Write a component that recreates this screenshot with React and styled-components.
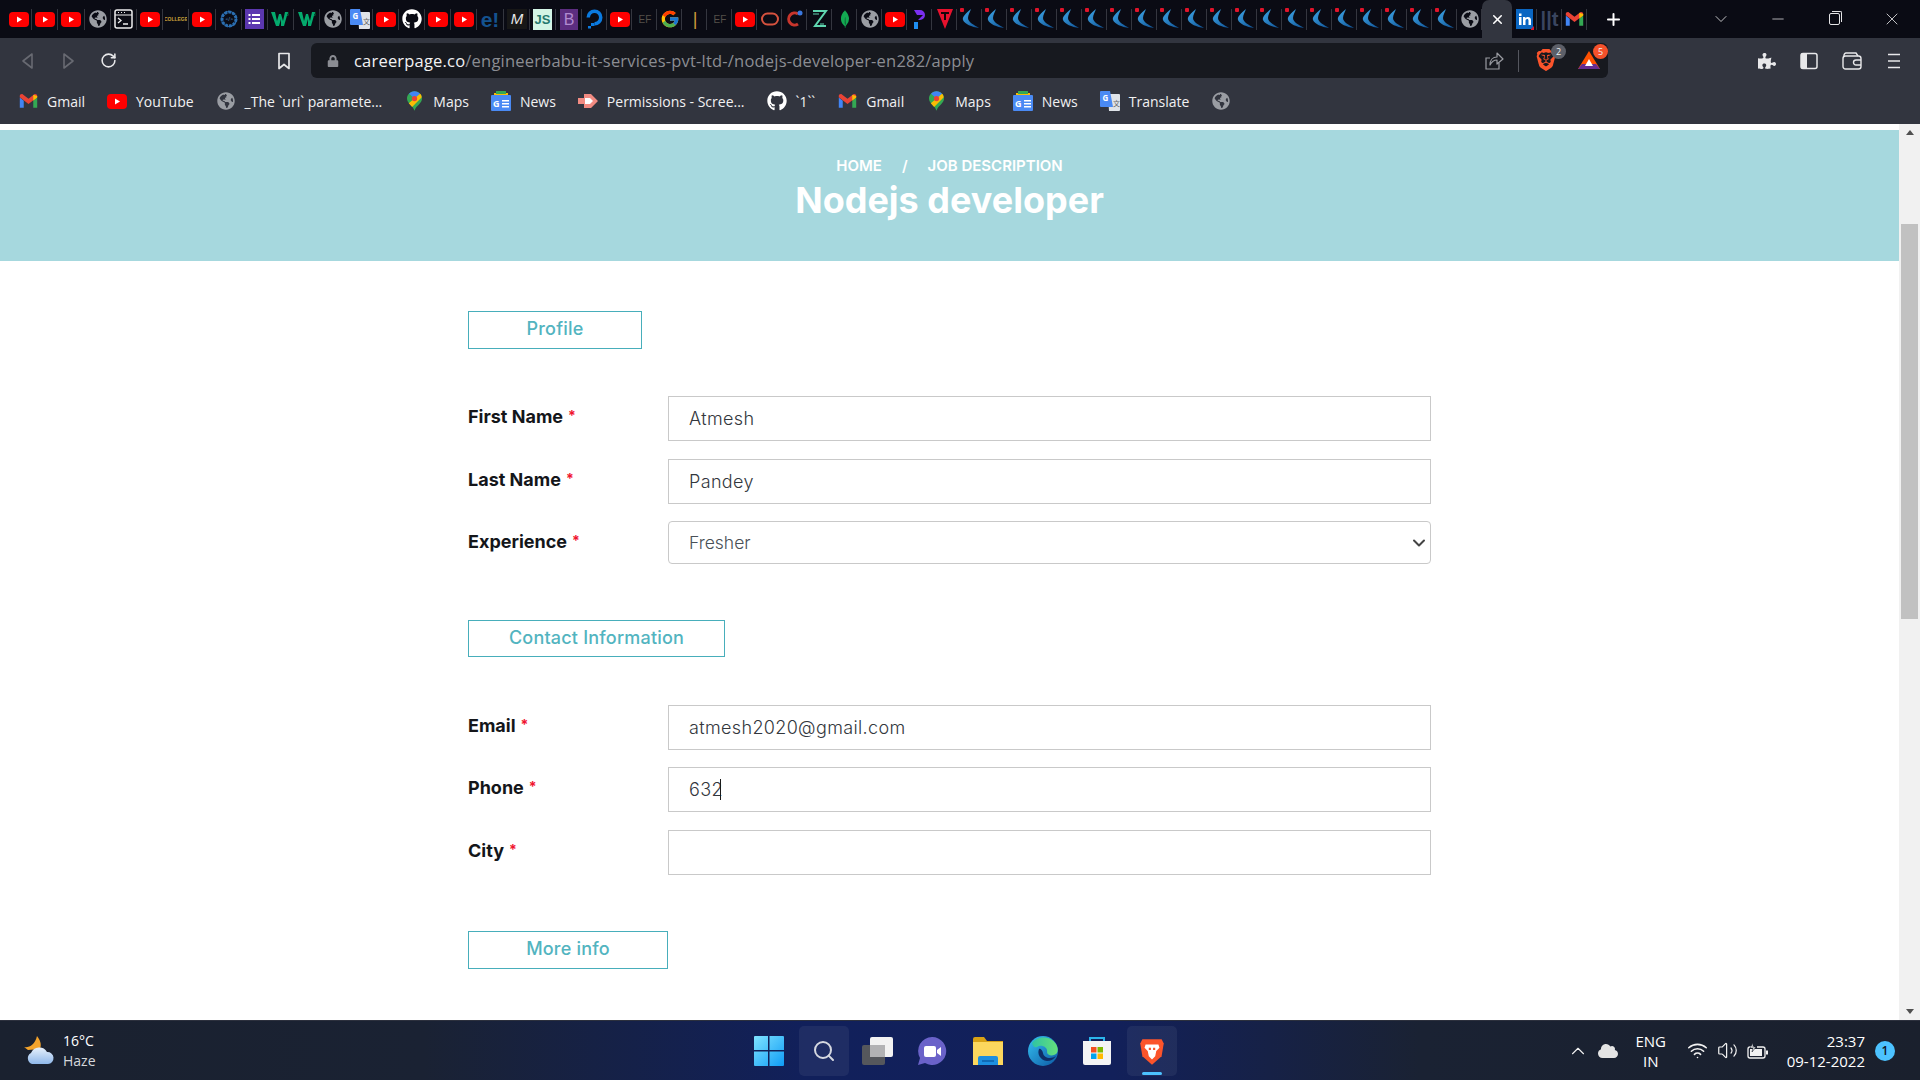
import React from "react"
import styled, { createGlobalStyle } from "styled-components"
import {
  ChevronDown,
  ChevronUp,
  Minus,
  Plus,
  RotateCw,
  Search,
  Volume2,
  Wifi,
  X,
} from "lucide-react"
import {
  FaCloud,
  FaGithub,
  FaGlobeAmericas,
  FaLock,
  FaPuzzlePiece,
} from "react-icons/fa"
import { FcGoogle } from "react-icons/fc"
import { SiBrave, SiMongodb } from "react-icons/si"

const GlobalStyle = createGlobalStyle`
  html, body {
    margin: 0;
    padding: 0;
    height: 100%;
    overflow: hidden;
    background: #fff;
  }
  * {
    box-sizing: border-box;
  }
`

const Screen = styled.div`
  display: flex;
  flex-direction: column;
  width: 1920px;
  height: 1080px;
  overflow: hidden;
  font-family: "Inter", "Liberation Sans", sans-serif;
`

/* tab strip */

const TabStrip = styled.div`
  display: flex;
  align-items: stretch;
  height: 38px;
  padding-left: 6px;
  background: #0a0b14;
`

const TabCell = styled.div`
  position: relative;
  display: flex;
  flex: none;
  align-items: center;
  justify-content: center;
  width: ${(p) => p.$w}px;
  height: 38px;

  &::after {
    content: "";
    position: absolute;
    right: 0;
    top: 9px;
    bottom: 8px;
    width: 1px;
    background: #34363f;
  }
`

const ActiveTab = styled.div`
  display: flex;
  flex: none;
  align-items: center;
  justify-content: center;
  width: 30px;
  height: 38px;
  border-radius: 7px 7px 0 0;
  background: #32353f;
  color: #fff;
`

const NewTab = styled.div`
  display: flex;
  align-items: center;
  justify-content: center;
  width: 30px;
  margin-left: 11px;
  color: #fff;
`

const WindowControls = styled.div`
  display: flex;
  align-items: center;
  margin-left: auto;
  color: #e4e4e6;
`

const WindowButton = styled.div`
  display: flex;
  align-items: center;
  justify-content: center;
  width: 57px;
`

const RestoreIcon = styled.div`
  position: relative;
  width: 11px;
  height: 12px;
  border: 1px solid #e4e4e6;
  border-radius: 2px;

  &::before {
    content: "";
    position: absolute;
    top: -3px;
    right: -3px;
    width: 9px;
    height: 10px;
    border-top: 1px solid #e4e4e6;
    border-right: 1px solid #e4e4e6;
    border-radius: 0 2px 0 0;
  }
`

/* toolbar */

const Toolbar = styled.div`
  display: flex;
  align-items: center;
  height: 45px;
  padding: 0 0 0 17px;
  background: #32353f;
`

const ToolButton = styled.div`
  display: flex;
  flex: none;
  align-items: center;
  justify-content: center;
  width: 20px;
  height: 20px;
  margin-right: ${(p) => p.$mr || 0}px;
  color: ${(p) => p.$color || "#e8e8ea"};
`

const UrlBar = styled.div`
  display: flex;
  flex: none;
  align-items: center;
  width: 1297px;
  height: 35px;
  margin-right: 149px;
  padding: 0 0 0 16px;
  border-radius: 6px;
  background: #17191f;
`

const UrlText = styled.div`
  margin-left: 15px;
  font-family: "Open Sans", "Liberation Sans", sans-serif;
  font-size: 16.5px;
  letter-spacing: 0.2px;
  white-space: nowrap;
  color: #8b8d93;

  b {
    font-weight: 400;
    color: #f2f2f3;
  }
`

const UrlTools = styled.div`
  display: flex;
  align-items: center;
  margin-left: auto;
  margin-right: 7px;
`

const UrlDivider = styled.div`
  width: 1px;
  height: 22px;
  margin: 0 16px 0 14px;
  background: #55575f;
`

const BadgeIcon = styled.div`
  position: relative;
  width: 24px;
  height: 24px;
  margin-right: ${(p) => p.$mr || 0}px;
`

const Counter = styled.span`
  position: absolute;
  top: -5px;
  right: -7px;
  width: 15px;
  height: 15px;
  border-radius: 50%;
  background: ${(p) => p.$bg};
  font-family: "Open Sans", sans-serif;
  font-size: 9px;
  line-height: 15px;
  text-align: center;
  color: #f0f0f0;
`

/* bookmarks */

const BookmarkBar = styled.div`
  display: flex;
  align-items: center;
  gap: 22px;
  height: 41px;
  padding: 0 0 5px 18px;
  background: #32353f;
`

const Bookmark = styled.div`
  display: flex;
  align-items: center;
  gap: 9px;
  font-family: "Open Sans", "Liberation Sans", sans-serif;
  font-size: 14px;
  white-space: nowrap;
  color: #f1f1f2;
`

const BookmarkIcon = styled.span`
  display: flex;
  flex: none;
  align-items: center;
  justify-content: center;
  width: 20px;
  height: 20px;
`

/* page */

const Viewport = styled.div`
  display: flex;
  flex: 1;
  min-height: 0;
`

const Page = styled.main`
  flex: 1;
  min-width: 0;
  padding-top: 6px;
  background: #fff;
`

const Hero = styled.header`
  display: flex;
  flex-direction: column;
  align-items: center;
  height: 131px;
  padding-top: 26px;
  background: #a6d8de;
  color: #fff;
`

const Breadcrumb = styled.div`
  display: flex;
  gap: 20px;
  font-size: 15px;
  font-weight: 600;
  line-height: 20px;
`

const Title = styled.h1`
  margin: 1px 0 0;
  font-size: 36px;
  font-weight: 700;
  line-height: 46px;
`

const Form = styled.form`
  width: 963px;
  margin: 0 auto;
  padding-top: 50px;
`

const SectionBox = styled.div`
  width: ${(p) => p.$w}px;
  height: ${(p) => p.$h || 38}px;
  margin-bottom: ${(p) => p.$mb || 0}px;
  border: 1px solid #48aebb;
  font-size: 18px;
  font-weight: 500;
  letter-spacing: 0.2px;
  line-height: 33px;
  text-align: center;
  color: #52b4c0;
`

const Row = styled.div`
  display: flex;
  margin-bottom: ${(p) => p.$mb || 0}px;
`

const Label = styled.label`
  flex: none;
  width: 200px;
  padding-top: 9px;
  font-size: 18px;
  font-weight: 700;
  line-height: 24px;
  color: #14161a;

  sup {
    margin-left: 5px;
    font-size: 14px;
    line-height: 0;
    vertical-align: 2px;
    color: #f0142f;
  }
`

const FieldWrap = styled.div`
  position: relative;
  flex: 1;
`

const Input = styled.input`
  display: block;
  width: 100%;
  height: 45px;
  padding: 0 20px 1px;
  border: 1px solid #c9c9c9;
  border-radius: 0;
  outline: none;
  background: #fff;
  font-family: inherit;
  font-size: 18px;
  font-weight: 300;
  letter-spacing: 0.35px;
  color: #33373d;
`

const Caret = styled.span`
  position: absolute;
  left: 52px;
  top: 12px;
  width: 1px;
  height: 21px;
  background: #1a1a1a;
`

const Select = styled.select`
  display: block;
  width: 100%;
  height: 43px;
  padding: 0 0 1px 20px;
  border: 1px solid #c9c9c9;
  border-radius: 4px;
  outline: none;
  appearance: none;
  background: #fff;
  font-family: inherit;
  font-size: 17.5px;
  font-weight: 300;
  color: #495057;
`

const SelectArrow = styled.span`
  position: absolute;
  top: 12px;
  right: 2px;
  display: flex;
  color: #444;
  pointer-events: none;
`

const Scrollbar = styled.div`
  display: flex;
  flex: none;
  flex-direction: column;
  align-items: center;
  width: 21px;
  background: #f1f1f1;
`

const ScrollArrow = styled.div`
  flex: none;
  width: 0;
  height: 0;
  margin: ${(p) => (p.$down ? "auto 0 6px" : "6px 0 0")};
  border-left: 4px solid transparent;
  border-right: 4px solid transparent;
  border-bottom: ${(p) => (p.$down ? "none" : "5px solid #505050")};
  border-top: ${(p) => (p.$down ? "5px solid #505050" : "none")};
`

const ScrollThumb = styled.div`
  flex: none;
  width: 17px;
  height: 395px;
  margin-top: 89px;
  background: #c1c1c1;
`

/* taskbar */

const Taskbar = styled.footer`
  display: grid;
  flex: none;
  grid-template-columns: 1fr auto 1fr;
  align-items: center;
  height: 60px;
  border-top: 1px solid #2c303d;
  background: linear-gradient(90deg, #1a212f 0%, #1a2233 22%, #11205b 42%, #12205a 58%, #1a2233 74%, #1a202d 100%);
  color: #fff;
  font-family: "Open Sans", "Liberation Sans", sans-serif;
`

const Weather = styled.div`
  display: flex;
  align-items: center;
  gap: 8px;
  padding-left: 23px;
  font-size: 14px;
  line-height: 20px;

  small {
    display: block;
    font-size: 14px;
    color: #d5d7db;
  }
`

const TaskIcons = styled.div`
  display: flex;
  align-items: center;
  margin-right: 4px;
`

const TaskIcon = styled.div`
  position: relative;
  display: flex;
  align-items: center;
  justify-content: center;
  width: ${(p) => p.$w}px;
  height: 50px;
  border-radius: 5px;
  background: ${(p) => (p.$lit ? "rgba(255,255,255,0.06)" : "transparent")};
`

const ActiveDash = styled.span`
  position: absolute;
  left: 15px;
  bottom: 1px;
  width: 20px;
  height: 3px;
  border-radius: 2px;
  background: #4cc2ff;
`

const Tray = styled.div`
  display: flex;
  align-items: center;
  justify-content: flex-end;
  padding-right: 25px;
  font-size: 15px;
  color: #fff;
`

const TrayIcon = styled.div`
  display: flex;
  align-items: center;
  justify-content: center;
  width: 30px;
  color: #f2f2f2;
`

const Lang = styled.div`
  width: 36px;
  margin: 0 14px 0 10px;
  line-height: 20px;
  text-align: center;
`

const Clock = styled.div`
  margin-left: 14px;
  line-height: 20px;
  text-align: right;
`

const NotifyBadge = styled.div`
  width: 20px;
  height: 20px;
  margin-left: 10px;
  border-radius: 50%;
  background: #4cc2ff;
  font-size: 12px;
  font-weight: 600;
  line-height: 20px;
  text-align: center;
  color: #10131a;
`

/* favicons and small drawings */

const Yt = () => (
  <svg width="20" height="15" viewBox="0 0 20 15">
    <rect width="20" height="15" rx="4" fill="#f00" />
    <path d="M8 4.5v6l5-3z" fill="#fff" />
  </svg>
)

const Globe = ({ size = 18, color = "#9a9da3" }) => <FaGlobeAmericas size={size} color={color} />

const Klogo = () => (
  <svg width="20" height="22" viewBox="0 0 20 22">
    <defs>
      <linearGradient id="kFill" x1="0" y1="0" x2="1" y2="1">
        <stop offset="0" stopColor="#3fa9ea" />
        <stop offset="1" stopColor="#0e4f92" />
      </linearGradient>
    </defs>
    <rect x="0" y="0" width="4" height="4" rx="1" fill="#e0142a" />
    <path d="M11 1C6 5 2 9 3 12c1.500 4 9 7 16 8-5-3-11-6-11-10 0-3 2-6 3-9z" fill="url(#kFill)" />
  </svg>
)

const Gmail = ({ size = 19 }) => (
  <svg width={size} height={size} viewBox="0 0 24 24">
    <path d="M1 7v13h5V11z" fill="#4285f4" />
    <path d="M18 11v9h5V7z" fill="#34a853" />
    <path d="M1 6.5 12 15l11-8.5V5c0-2-2.300-3-4-2l-7 5.500L5 3C3.300 2 1 3 1 5z" fill="#ea4335" />
    <path d="M18 3.500 23 5v2l-5 4z" fill="#fbbc04" />
  </svg>
)

const MapsPin = () => (
  <svg width="15" height="20" viewBox="0 0 17 22">
    <path d="M8.500 0C3.800 0 0 3.700 0 8.300c0 5.600 6.300 7.600 8.500 13.700C10.700 15.900 17 13.900 17 8.300 17 3.700 13.200 0 8.500 0z" fill="#34a853" />
    <path d="M8.500 0C6 0 3.900 1 2.300 2.700l6.200 5.600 6.300-5.600C13.200 1 11 0 8.500 0z" fill="#4285f4" />
    <path d="M14.800 2.700 2 13.500c1 1.400 2.500 2.800 3.800 4.300L16.500 7c.3-1.700-.4-3.100-1.700-4.300z" fill="#fbbc04" />
    <circle cx="8.500" cy="8.300" r="3" fill="#ea4335" />
  </svg>
)

const NewsIcon = () => (
  <svg width="20" height="20" viewBox="0 0 20 20">
    <path d="M3 2h14v4H3z" fill="#fbbc04" />
    <path d="M5 0h10v3H5z" fill="#34a853" />
    <rect y="4" width="20" height="16" rx="1" fill="#4a8af4" />
    <text x="2" y="16" fontSize="9" fontWeight="700" fontFamily="Open Sans" fill="#fff">G</text>
    <path d="M11 9h7v1.500h-7zM11 12h7v1.500h-7zM11 15h7v1.500h-7z" fill="#fff" />
  </svg>
)

const TranslateIcon = () => (
  <svg width="20" height="20" viewBox="0 0 20 20">
    <path d="M8 3h11a1 1 0 0 1 1 1v15a1 1 0 0 1-1 1H9z" fill="#dfe3e8" />
    <path d="M1 0h9l3 16H1a1 1 0 0 1-1-1V1a1 1 0 0 1 1-1z" fill="#4a8af4" />
    <text x="2.500" y="10" fontSize="8" fontWeight="700" fontFamily="Open Sans" fill="#fff">G</text>
    <text x="13" y="15" fontSize="7" fontFamily="Noto Sans CJK SC" fill="#666">文</text>
  </svg>
)

const PermissionsIcon = () => (
  <svg width="20" height="16" viewBox="0 0 20 16">
    <path d="M0 5h6V1l7 0 7 7-7 7H6v-4H0z" fill="#f28b82" />
    <path d="M7 5h5l3 3-3 3H7z" fill="#fff" />
  </svg>
)

const TerminalIcon = () => (
  <svg width="19" height="20" viewBox="0 0 19 20">
    <rect x="1" y="1" width="17" height="18" rx="2" fill="none" stroke="#eee" strokeWidth="1.500" />
    <path d="M1 6h17M4 3.500h1M7 3.500h1M10 3.500h1" stroke="#eee" />
    <path d="m4 9 3 2.500L4 14M9 15h5" fill="none" stroke="#eee" strokeWidth="1.300" />
  </svg>
)

const GearIcon = () => (
  <svg width="20" height="20" viewBox="0 0 20 20">
    <circle cx="10" cy="10" r="7" fill="none" stroke="#2a6db0" strokeWidth="3" strokeDasharray="3 1" />
    <circle cx="10" cy="10" r="7.500" fill="none" stroke="#2a6db0" strokeWidth="1" />
    <text x="6.500" y="12" fontSize="5" fill="#5a9ad8" fontFamily="Open Sans">&lt;/&gt;</text>
  </svg>
)

const FormsIcon = () => (
  <svg width="19" height="20" viewBox="0 0 19 20">
    <rect width="19" height="20" fill="#5b37b0" />
    <path d="M7 5h8v2H7zM7 9h8v2H7zM7 13h8v2H7zM3.500 5h2v2h-2zM3.500 9h2v2h-2zM3.500 13h2v2h-2z" fill="#fff" />
  </svg>
)

const W3Icon = () => (
  <svg width="19" height="18" viewBox="0 0 19 18">
    <path d="M0 2h4l2 9 2-7h2l2 7 2-9h3l-4 14h-3L10 9l-2 7H5z" fill="#04aa6d" />
    <text x="15" y="6" fontSize="5" fill="#04aa6d" fontFamily="Open Sans">3</text>
  </svg>
)

const LetterFav = ({ w = 18, h = 20, bg = "none", color, size = 14, weight = 400, style: fontStyle, children }) => (
  <svg width={w} height={h} viewBox={`0 0 ${w} ${h}`}>
    <rect width={w} height={h} fill={bg} />
    <text x={w / 2} y={h / 2 + size * 0.36} textAnchor="middle" fontFamily="Liberation Sans" fontSize={size} fontWeight={weight} fontStyle={fontStyle} fill={color}>
      {children}
    </text>
  </svg>
)

const CloudRing = () => (
  <svg width="19" height="22" viewBox="0 0 19 22">
    <path d="M9.500 17.500V14a4.500 4.500 0 1 0-4.500-4.500H1.500a8 8 0 1 1 8 8z" fill="#0a7ae0" />
    <path d="M6 15h3.500v3H6zM3 18h3v2.500H3z" fill="#0a7ae0" />
  </svg>
)

const OracleIcon = () => (
  <svg width="18" height="14" viewBox="0 0 18 14">
    <rect x="1" y="1.500" width="16" height="11" rx="5.500" fill="none" stroke="#d6523e" strokeWidth="2" />
  </svg>
)

const CIcon = () => (
  <svg width="18" height="20" viewBox="0 0 18 20">
    <path d="M12 5a6 6 0 1 0 0 10" fill="none" stroke="#c8352c" strokeWidth="3" />
    <circle cx="14" cy="4" r="2.500" fill="#3a78e0" />
  </svg>
)

const ZIcon = () => (
  <svg width="17" height="20" viewBox="0 0 17 20">
    <path d="M2 2h13L4 17h11" fill="none" stroke="#5fd6b0" strokeWidth="2" />
    <path d="M2 5h6M9 15h4" stroke="#5fd6b0" />
  </svg>
)

const PIcon = () => (
  <svg width="14" height="22" viewBox="0 0 14 22">
    <path d="M1 2h6a5 5 0 0 1 0 10H5l5-5H4z" fill="#7b2ff2" />
    <path d="M1 14h4v7H1z" fill="#1f8ef1" />
  </svg>
)

const TIcon = () => (
  <svg width="16" height="22" viewBox="0 0 16 22">
    <path d="M0 1h16L8 21z" fill="#e8112d" />
    <path d="M4 4h8v2H9v6H7V6H4z" fill="#14060a" />
  </svg>
)

const LinkedIn = () => (
  <svg width="18" height="21" viewBox="0 0 18 21">
    <rect width="17" height="20" fill="#0a66c2" />
    <path d="M3 8h2.500v8H3zM3 4.500h2.500V7H3zM7 8h2.400v1.200C10 8.300 11 8 12 8c2 0 3 1.300 3 3.500V16h-2.500v-4.200c0-1-.4-1.700-1.300-1.700-1 0-1.700.7-1.700 1.900v4H7z" fill="#fff" />
    <path d="M15 20l3-3v4h-3z" fill="#d8182c" />
  </svg>
)

const TumblrLike = () => (
  <LetterFav w={21} h={22} color="#3a4560" size={20} weight={700}>
    ||t
  </LetterFav>
)

const tabs = [
  ["yt", 26.2], ["yt", 26.2], ["yt", 26.2], ["globe", 26.2], ["term", 26.2], ["yt", 26.2], ["college", 26.2], ["yt", 26.2],
  ["gear", 26.2], ["forms", 26.2], ["w3", 26.2], ["w3", 26.2], ["globe", 26.2], ["translate", 26.2], ["yt", 26.2], ["github", 26.2],
  ["yt", 26.2], ["yt", 26.2], ["e", 26.2], ["m", 26.2], ["js", 26.2], ["b", 26.2], ["cloud", 25], ["yt", 25],
  ["ef", 25], ["google", 25], ["bars", 25], ["ef", 25], ["yt", 25], ["oracle", 25], ["c", 25], ["z", 25],
  ["mongo", 25], ["globe", 25], ["yt", 25], ["p", 25], ["t", 25],
  ...Array.from({ length: 20 }, () => ["k", 25]),
  ["globe", 25],
]

const favicon = (kind) => {
  switch (kind) {
    case "yt":
      return <Yt />
    case "globe":
      return <Globe />
    case "term":
      return <TerminalIcon />
    case "college":
      return <LetterFav w={22} h={10} color="#c9a13a" size={5} weight={700}>COLLEGE</LetterFav>
    case "gear":
      return <GearIcon />
    case "forms":
      return <FormsIcon />
    case "w3":
      return <W3Icon />
    case "translate":
      return <TranslateIcon />
    case "github":
      return <FaGithub size={20} color="#fff" />
    case "e":
      return <LetterFav w={20} h={22} color="#14528f" size={21} weight={700}>e!</LetterFav>
    case "m":
      return <LetterFav w={20} h={20} bg="#171717" color="#e8e8e8" size={15} style="italic">M</LetterFav>
    case "js":
      return <LetterFav w={19} h={21} bg="#d3f5e6" color="#24786e" size={13} weight={700}>JS</LetterFav>
    case "b":
      return <LetterFav w={18} h={21} bg="#5c2d80" color="#b08bd0" size={16}>B</LetterFav>
    case "cloud":
      return <CloudRing />
    case "ef":
      return <LetterFav w={20} h={14} color="#55504a" size={10}>EF</LetterFav>
    case "google":
      return <FcGoogle size={20} />
    case "bars":
      return <LetterFav w={14} h={22} color="#d09a3a" size={18}>|</LetterFav>
    case "oracle":
      return <OracleIcon />
    case "c":
      return <CIcon />
    case "z":
      return <ZIcon />
    case "mongo":
      return <SiMongodb size={18} color="#13aa52" />
    case "p":
      return <PIcon />
    case "t":
      return <TIcon />
    default:
      return <Klogo />
  }
}

const BackIcon = ({ flip }) => (
  <svg width="14" height="18" viewBox="0 0 14 18" style={flip ? { transform: "scaleX(-1)" } : undefined}>
    <path d="M12 2 3 9l9 7z" fill="none" stroke="#686a72" strokeWidth="1.600" strokeLinejoin="round" />
  </svg>
)

const BookmarkOutline = () => (
  <svg width="14" height="18" viewBox="0 0 14 18">
    <path d="M2 1.500h10v15l-5-4-5 4z" fill="none" stroke="#e8e8ea" strokeWidth="1.700" strokeLinejoin="round" />
  </svg>
)

const ShareIcon = () => (
  <svg width="20" height="20" viewBox="0 0 20 20" fill="none" stroke="#9a9ca2" strokeWidth="1.200">
    <path d="M15 12v6H2V7h4" />
    <path d="M6 14c0-5 3-8 7-8V2l6 6-6 5V9c-3 0-5 1-7 5z" strokeLinejoin="round" />
  </svg>
)

const BatIcon = () => (
  <svg width="24" height="22" viewBox="0 0 24 22">
    <path d="M12 2 1 20h22z" fill="#ff5000" />
    <path d="M1 20h22l-4-5H5z" fill="#662d91" />
    <path d="M12 10l-4 7h8z" fill="#fff" />
  </svg>
)

const SidebarIcon = () => (
  <svg width="18" height="18" viewBox="0 0 18 18">
    <rect x="1" y="1.500" width="16" height="15" rx="2" fill="none" stroke="#e8e8ea" strokeWidth="1.500" />
    <rect x="1" y="1.500" width="6" height="15" fill="#e8e8ea" />
  </svg>
)

const WalletIcon = () => (
  <svg width="20" height="18" viewBox="0 0 20 18" fill="none" stroke="#e8e8ea" strokeWidth="1.400">
    <path d="M2 5V3.500C2 2 3 1 4 1h10l2 3" />
    <rect x="1" y="4" width="18" height="13" rx="2.500" />
    <path d="M19 8h-5a2 2 0 0 0 0 5h5" />
  </svg>
)

const MenuIcon = () => (
  <svg width="16" height="16" viewBox="0 0 16 16">
    <path d="M2 1.500h12M2 8h12M2 14.500h12" stroke="#e8e8ea" strokeWidth="1.500" />
  </svg>
)

const BraveFull = ({ size }) => (
  <svg width={size} height={size * 1.15} viewBox="0 0 24 28">
    <path d="M3 3h18l2 4-2 12-9 8-9-8L1 7z" fill="#fb542b" />
    <path d="M6 8h12l1 3-3 3-1 5-3 3-3-3-1-5-3-3z" fill="#fff" />
    <path d="M9 11h2v2H9zM13 11h2v2h-2z" fill="#fb542b" />
  </svg>
)

const WeatherIcon = () => (
  <svg width="32" height="32" viewBox="0 0 32 32">
    <defs>
      <linearGradient id="cloudFill" x1="0" y1="0" x2="0" y2="1">
        <stop offset="0" stopColor="#e6f0fb" />
        <stop offset="1" stopColor="#8fb8ea" />
      </linearGradient>
    </defs>
    <path d="M14 1c3 4 5 8 3 13l-12 1-4-3c5 1 11-2 13-11z" fill="#f3a32c" />
    <path d="M9 29a6 6 0 0 1-1-11 9 9 0 0 1 16-1 6 6 0 0 1 1 12z" fill="url(#cloudFill)" />
  </svg>
)

const StartIcon = () => (
  <svg width="30" height="30" viewBox="0 0 30 30">
    <defs>
      <linearGradient id="startFill" x1="0" y1="0" x2="1" y2="1">
        <stop offset="0" stopColor="#7fe3ff" />
        <stop offset="1" stopColor="#0f9cf5" />
      </linearGradient>
    </defs>
    <path d="M0 1a1 1 0 0 1 1-1h13v14H0zM15.500 0H29a1 1 0 0 1 1 1v13H15.500zM0 15.500h14V30H1a1 1 0 0 1-1-1zM15.500 15.500H30V29a1 1 0 0 1-1 1H15.500z" fill="url(#startFill)" />
  </svg>
)

const TaskViewIcon = () => (
  <svg width="32" height="28" viewBox="0 0 32 28">
    <rect y="8" width="23" height="20" rx="2" fill="#55575c" />
    <rect x="8" width="23" height="20" rx="2" fill="#f2f2f2" />
    <rect x="8" y="8" width="15" height="12" fill="#b2b2b4" />
  </svg>
)

const ChatIcon = () => (
  <svg width="30" height="30" viewBox="0 0 30 30">
    <path d="M15 1a14 14 0 1 1-7 26L1 29l2-7A14 14 0 0 1 15 1z" fill="#6a62c9" />
    <rect x="7" y="10" width="12" height="11" rx="2" fill="#fff" />
    <path d="m20 14 4-3v9l-4-3z" fill="#fff" />
  </svg>
)

const FolderIcon = () => (
  <svg width="30" height="28" viewBox="0 0 30 28">
    <path d="M0 2a2 2 0 0 1 2-2h9l3 4h16v6H0z" fill="#d9a215" />
    <path d="M0 5h30v23H0z" fill="#fcd75e" />
    <path d="M5 21a2 2 0 0 1 2-2h16a2 2 0 0 1 2 2v7H5z" fill="#1d8fe0" />
    <path d="M9 24h12" stroke="#0c5fa8" strokeWidth="1.500" />
  </svg>
)

const EdgeIcon = () => (
  <svg width="30" height="30" viewBox="0 0 30 30">
    <defs>
      <linearGradient id="edgeA" x1="0" y1="0" x2="1" y2="1">
        <stop offset="0" stopColor="#35c1f1" />
        <stop offset="1" stopColor="#0c59a4" />
      </linearGradient>
      <linearGradient id="edgeB" x1="0" y1="0" x2="1" y2="0">
        <stop offset="0" stopColor="#2fc3a3" />
        <stop offset="1" stopColor="#66e07a" />
      </linearGradient>
    </defs>
    <circle cx="15" cy="15" r="15" fill="url(#edgeA)" />
    <path d="M4 7C9 0 22-1 28 8c3 5 2 10-2 11-3 1-7 0-7-3 1-5-6-8-10-5-2 1-4 0-5-4z" fill="url(#edgeB)" />
    <path d="M11 13c-2 5 1 11 8 12 4 0 7-2 9-5-4 3-12 3-13-3-.5-3-3-5-4-4z" fill="#0f2d66" />
  </svg>
)

const StoreIcon = () => (
  <svg width="30" height="30" viewBox="0 0 30 30">
    <path d="M8 6V2h14v4" fill="none" stroke="#2bb4ea" strokeWidth="2" />
    <path d="M1 5h28v22a2 2 0 0 1-2 2H3a2 2 0 0 1-2-2z" fill="#f4f4f4" />
    <rect x="9" y="11" width="5.500" height="5.500" fill="#f25022" />
    <rect x="15.500" y="11" width="5.500" height="5.500" fill="#7fba00" />
    <rect x="9" y="17.500" width="5.500" height="5.500" fill="#00a4ef" />
    <rect x="15.500" y="17.500" width="5.500" height="5.500" fill="#ffb900" />
  </svg>
)

const BatteryIcon = () => (
  <svg width="22" height="18" viewBox="0 0 22 18" fill="none" stroke="#f2f2f2" strokeWidth="1.300">
    <path d="M7 5H3a2 2 0 0 0-2 2v7a2 2 0 0 0 2 2h13a2 2 0 0 0 2-2V7a2 2 0 0 0-2-2h-6" />
    <path d="M20 8.500v4" strokeWidth="2" />
    <path d="M3 14V7h12v7z" fill="#f2f2f2" stroke="none" />
    <path d="M6 1 3 6h3l-1 4 4-5H6z" fill="#f2f2f2" stroke="#1a202d" strokeWidth="0.600" />
  </svg>
)

const bookmarks = [
  [<Gmail key="g" />, "Gmail"],
  [<Yt key="y" />, "YouTube"],
  [<Globe key="w" />, "_The `uri` paramete..."],
  [<MapsPin key="m" />, "Maps"],
  [<NewsIcon key="n" />, "News"],
  [<PermissionsIcon key="p" />, "Permissions - Scree..."],
  [<FaGithub key="h" size={20} color="#fff" />, "`1``"],
  [<Gmail key="g2" />, "Gmail"],
  [<MapsPin key="m2" />, "Maps"],
  [<NewsIcon key="n2" />, "News"],
  [<TranslateIcon key="t" />, "Translate"],
  [<Globe key="w2" />, ""],
]

const Field = ({ label, value, mb, caret }) => (
  <Row $mb={mb}>
    <Label>
      {label}
      <sup>*</sup>
    </Label>
    <FieldWrap>
      <Input defaultValue={value} readOnly />
      {caret && <Caret />}
    </FieldWrap>
  </Row>
)

const App = () => {
  return (
    <Screen>
      <GlobalStyle />
      <TabStrip>
        {tabs.map(([kind, w], i) => (
          <TabCell key={i} $w={w}>
            {favicon(kind)}
          </TabCell>
        ))}
        <ActiveTab>
          <X size={15} strokeWidth={2.5} />
        </ActiveTab>
        <TabCell $w={25}>
          <LinkedIn />
        </TabCell>
        <TabCell $w={25}>
          <TumblrLike />
        </TabCell>
        <TabCell $w={25}>
          <Gmail />
        </TabCell>
        <NewTab>
          <Plus size={19} strokeWidth={2.5} />
        </NewTab>
        <WindowControls>
          <WindowButton>
            <ChevronDown size={20} strokeWidth={1} />
          </WindowButton>
          <WindowButton>
            <Minus size={18} strokeWidth={1} />
          </WindowButton>
          <WindowButton>
            <RestoreIcon />
          </WindowButton>
          <WindowButton>
            <X size={20} strokeWidth={1} />
          </WindowButton>
        </WindowControls>
      </TabStrip>

      <Toolbar>
        <ToolButton $mr={22}>
          <BackIcon />
        </ToolButton>
        <ToolButton $mr={19}>
          <BackIcon flip />
        </ToolButton>
        <ToolButton $mr={156}>
          <RotateCw size={17} strokeWidth={2.2} />
        </ToolButton>
        <ToolButton $mr={17}>
          <BookmarkOutline />
        </ToolButton>
        <UrlBar>
          <FaLock size={12} color="#8b8d93" />
          <UrlText>
            <b>careerpage.co</b>/engineerbabu-it-services-pvt-ltd-/nodejs-developer-en282/apply
          </UrlText>
          <UrlTools>
            <ShareIcon />
            <UrlDivider />
            <BadgeIcon $mr={18}>
              <SiBrave size={22} color="#fb542b" />
              <Counter $bg="#5c5f68">2</Counter>
            </BadgeIcon>
            <BadgeIcon>
              <BatIcon />
              <Counter $bg="#f5512b">5</Counter>
            </BadgeIcon>
          </UrlTools>
        </UrlBar>
        <ToolButton $mr={22}>
          <FaPuzzlePiece size={18} />
        </ToolButton>
        <ToolButton $mr={23}>
          <SidebarIcon />
        </ToolButton>
        <ToolButton $mr={22}>
          <WalletIcon />
        </ToolButton>
        <ToolButton>
          <MenuIcon />
        </ToolButton>
      </Toolbar>

      <BookmarkBar>
        {bookmarks.map(([icon, text], i) => (
          <Bookmark key={i}>
            <BookmarkIcon>{icon}</BookmarkIcon>
            {text}
          </Bookmark>
        ))}
      </BookmarkBar>

      <Viewport>
        <Page>
          <Hero>
            <Breadcrumb>
              <span>HOME</span>
              <span>/</span>
              <span>JOB DESCRIPTION</span>
            </Breadcrumb>
            <Title>Nodejs developer</Title>
          </Hero>
          <Form>
            <SectionBox $w={174} $mb={47}>Profile</SectionBox>
            <Field label="First Name" value="Atmesh" mb={18} />
            <Field label="Last Name" value="Pandey" mb={17} />
            <Row $mb={56}>
              <Label>
                Experience
                <sup>*</sup>
              </Label>
              <FieldWrap>
                <Select defaultValue="Fresher">
                  <option>Fresher</option>
                  <option>Experienced</option>
                </Select>
                <SelectArrow>
                  <ChevronDown size={20} strokeWidth={2.4} />
                </SelectArrow>
              </FieldWrap>
            </Row>
            <SectionBox $w={257} $h={37} $mb={48}>Contact Information</SectionBox>
            <Field label="Email" value="atmesh2020@gmail.com" mb={17} />
            <Field label="Phone" value="632" mb={18} caret />
            <Field label="City" value="" mb={56} />
            <SectionBox $w={200}>More info</SectionBox>
          </Form>
        </Page>
        <Scrollbar>
          <ScrollArrow />
          <ScrollThumb />
          <ScrollArrow $down />
        </Scrollbar>
      </Viewport>

      <Taskbar>
        <Weather>
          <WeatherIcon />
          <div>
            16°C
            <small>Haze</small>
          </div>
        </Weather>
        <TaskIcons>
          <TaskIcon $w={60}>
            <StartIcon />
          </TaskIcon>
          <TaskIcon $w={50} $lit>
            <Search size={24} color="#d5d8e0" strokeWidth={2} />
          </TaskIcon>
          <TaskIcon $w={58}>
            <TaskViewIcon />
          </TaskIcon>
          <TaskIcon $w={50}>
            <ChatIcon />
          </TaskIcon>
          <TaskIcon $w={62}>
            <FolderIcon />
          </TaskIcon>
          <TaskIcon $w={48}>
            <EdgeIcon />
          </TaskIcon>
          <TaskIcon $w={60}>
            <StoreIcon />
          </TaskIcon>
          <TaskIcon $w={50} $lit>
            <BraveFull size={26} />
            <ActiveDash />
          </TaskIcon>
        </TaskIcons>
        <Tray>
          <TrayIcon>
            <ChevronUp size={22} strokeWidth={1.2} />
          </TrayIcon>
          <TrayIcon>
            <FaCloud size={20} color="#e4e4e4" />
          </TrayIcon>
          <Lang>
            ENG
            <br />
            IN
          </Lang>
          <TrayIcon>
            <Wifi size={21} strokeWidth={1.8} />
          </TrayIcon>
          <TrayIcon>
            <Volume2 size={21} strokeWidth={1.4} />
          </TrayIcon>
          <TrayIcon>
            <BatteryIcon />
          </TrayIcon>
          <Clock>
            23:37
            <br />
            09-12-2022
          </Clock>
          <NotifyBadge>1</NotifyBadge>
        </Tray>
      </Taskbar>
    </Screen>
  )
}

export default App
